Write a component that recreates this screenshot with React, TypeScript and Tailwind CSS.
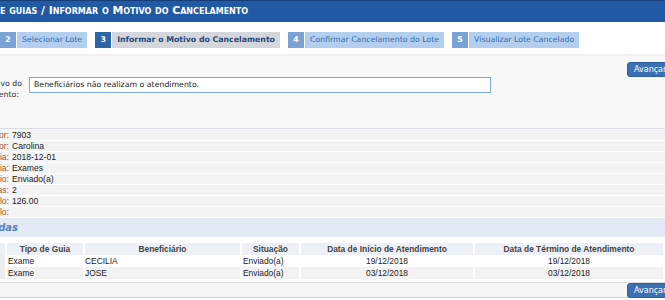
const SANS = "font-['DejaVu_Sans',Verdana,sans-serif]";
const ARIAL = "font-['Liberation_Sans',Arial,sans-serif]";

type Step = { n: number; label: string; active?: boolean };

const STEPS: Step[] = [
  { n: 2, label: "Selecionar Lote" },
  { n: 3, label: "Informar o Motivo do Cancelamento", active: true },
  { n: 4, label: "Confirmar Cancelamento do Lote" },
  { n: 5, label: "Visualizar Lote Cancelado" },
];

const INFO: [string, string][] = [
  ["Código do Prestador:", "7903"],
  ["Nome do Prestador:", "Carolina"],
  ["Competência:", "2018-12-01"],
  ["Categoria:", "Exames"],
  ["Status do Envio:", "Enviado(a)"],
  ["Quantidade de Guias:", "2"],
  ["Valor do Protocolo:", "126.00"],
  ["Valor Glosado do Protocolo:", ""],
];

const GUIAS = [
  { tipo: "Exame", benef: "CECILIA", sit: "Enviado(a)", ini: "19/12/2018", fim: "19/12/2018" },
  { tipo: "Exame", benef: "JOSE", sit: "Enviado(a)", ini: "03/12/2018", fim: "03/12/2018" },
];

const COLS = "grid grid-cols-[5px_76px_155px_57px_172px_188px_20px] gap-x-[2px]";

function Avancar() {
  return (
    <button
      className={`${SANS} h-[15px] w-[50px] -mr-[12px] rounded-[3px] border border-[#2f5f9f] bg-[#3b70b4] pl-[6px] text-left text-[8px] leading-[13px] text-white`}
    >
      Avançar
    </button>
  );
}

export default function App() {
  return (
    <div className="h-[300px] w-[665px] overflow-hidden bg-white">
      {/* barra de titulo */}
      <header className="flex h-[22px] items-center border-t border-[#173f77] bg-[#2159a5]">
        <span className={`${SANS} text-[10.8px] font-bold [font-variant:small-caps] text-white`}>
          e guias / Informar o Motivo do Cancelamento
        </span>
      </header>

      {/* passos */}
      <nav className={`${SANS} mt-[10px] flex h-[16px] gap-[8px] text-[7.8px]`}>
        {STEPS.map((s) => (
          <div key={s.n} className="flex gap-px">
            <span
              className={`flex w-[16px] items-center justify-center font-bold text-white ${
                s.active ? "bg-[#2e64a8]" : "bg-[#7ba2d4]"
              }`}
            >
              {s.n}
            </span>
            <span
              className={`flex items-center px-[5px] ${
                s.active ? "bg-[#d3d6db] font-bold text-[#28497a]" : "bg-[#b3cfef] text-[#3a6cae]"
              }`}
            >
              {s.label}
            </span>
          </div>
        ))}
      </nav>

      {/* formulario */}
      <section className="mt-[6px] h-[75px] border-t-2 border-b border-t-[#f0f0f0] border-b-[#d8dbe2] bg-[#f8f8f8]">
        <div className="mt-[6px] flex justify-end">
          <Avancar />
        </div>
        <div className="flex items-start gap-[7px]">
          <label
            className={`${SANS} -ml-[58px] mt-[1px] flex w-[80px] shrink-0 flex-col items-end text-[7.8px] leading-[11px] text-[#333]`}
          >
            <span>Motivo do</span>
            <span className="pr-[3px]">Cancelamento:</span>
          </label>
          <div
            className={`${SANS} flex h-[16px] w-[462px] items-center border border-[#7aa7e6] bg-white px-[4px] text-[7.8px] text-[#222]`}
          >
            Beneficiários não realizam o atendimento.
          </div>
        </div>
      </section>

      {/* dados do lote */}
      <div className={`${ARIAL} bg-[#f8f8f8] pt-px text-[8.6px]`}>
        {INFO.map(([k, v]) => (
          <div key={k} className="flex h-[11px] border-b border-white">
            <span className="-ml-[110px] w-[120px] shrink-0 bg-[#f3f3f3] pr-px text-right leading-[10px] text-[#a8552a]">
              {k}
            </span>
            <span className="ml-px flex-1 bg-[#f3f3f3] pl-px leading-[10px] text-[#222]">{v}</span>
          </div>
        ))}
      </div>

      {/* guias selecionadas */}
      <div className="flex h-[19px] items-center bg-[#e3eaf5]">
        <span className={`${SANS} -ml-[200px] w-[218px] shrink-0 text-right text-[10px] font-bold italic text-[#5580bd]`}>
          Guias Selecionadas
        </span>
      </div>

      <div className={`${ARIAL} mt-[6px] text-[8.4px] leading-[12px]`}>
        <div className={`${COLS} h-[12px] font-bold text-[#444]`}>
          <span className="bg-[#edf1f7]" />
          <span className="bg-[#edf1f7] text-center">Tipo de Guia</span>
          <span className="bg-[#edf1f7] text-center">Beneficiário</span>
          <span className="bg-[#edf1f7] text-center">Situação</span>
          <span className="bg-[#edf1f7] text-center">Data de Início de Atendimento</span>
          <span className="bg-[#edf1f7] text-center">Data de Término de Atendimento</span>
          <span className="bg-[#edf1f7]" />
        </div>
        {GUIAS.map((g, i) => {
          const bg = i % 2 === 0 ? "bg-white" : "bg-[#f2f2f2]";
          return (
            <div key={g.benef} className={`${COLS} h-[12px] text-[#222]`}>
              <span className="bg-[#eeeeee]" />
              <span className={`${bg} pl-px`}>{g.tipo}</span>
              <span className={bg}>{g.benef}</span>
              <span className={`${bg} pl-px`}>{g.sit}</span>
              <span className={`${bg} text-center`}>{g.ini}</span>
              <span className={`${bg} text-center`}>{g.fim}</span>
              <span className={bg} />
            </div>
          );
        })}
      </div>

      <div className="mt-[3px] flex h-[16px] justify-end border-t border-b border-t-[#dcdcdc] border-b-[#cfcfcf] bg-[#f7f7f7]">
        <Avancar />
      </div>
    </div>
  );
}
